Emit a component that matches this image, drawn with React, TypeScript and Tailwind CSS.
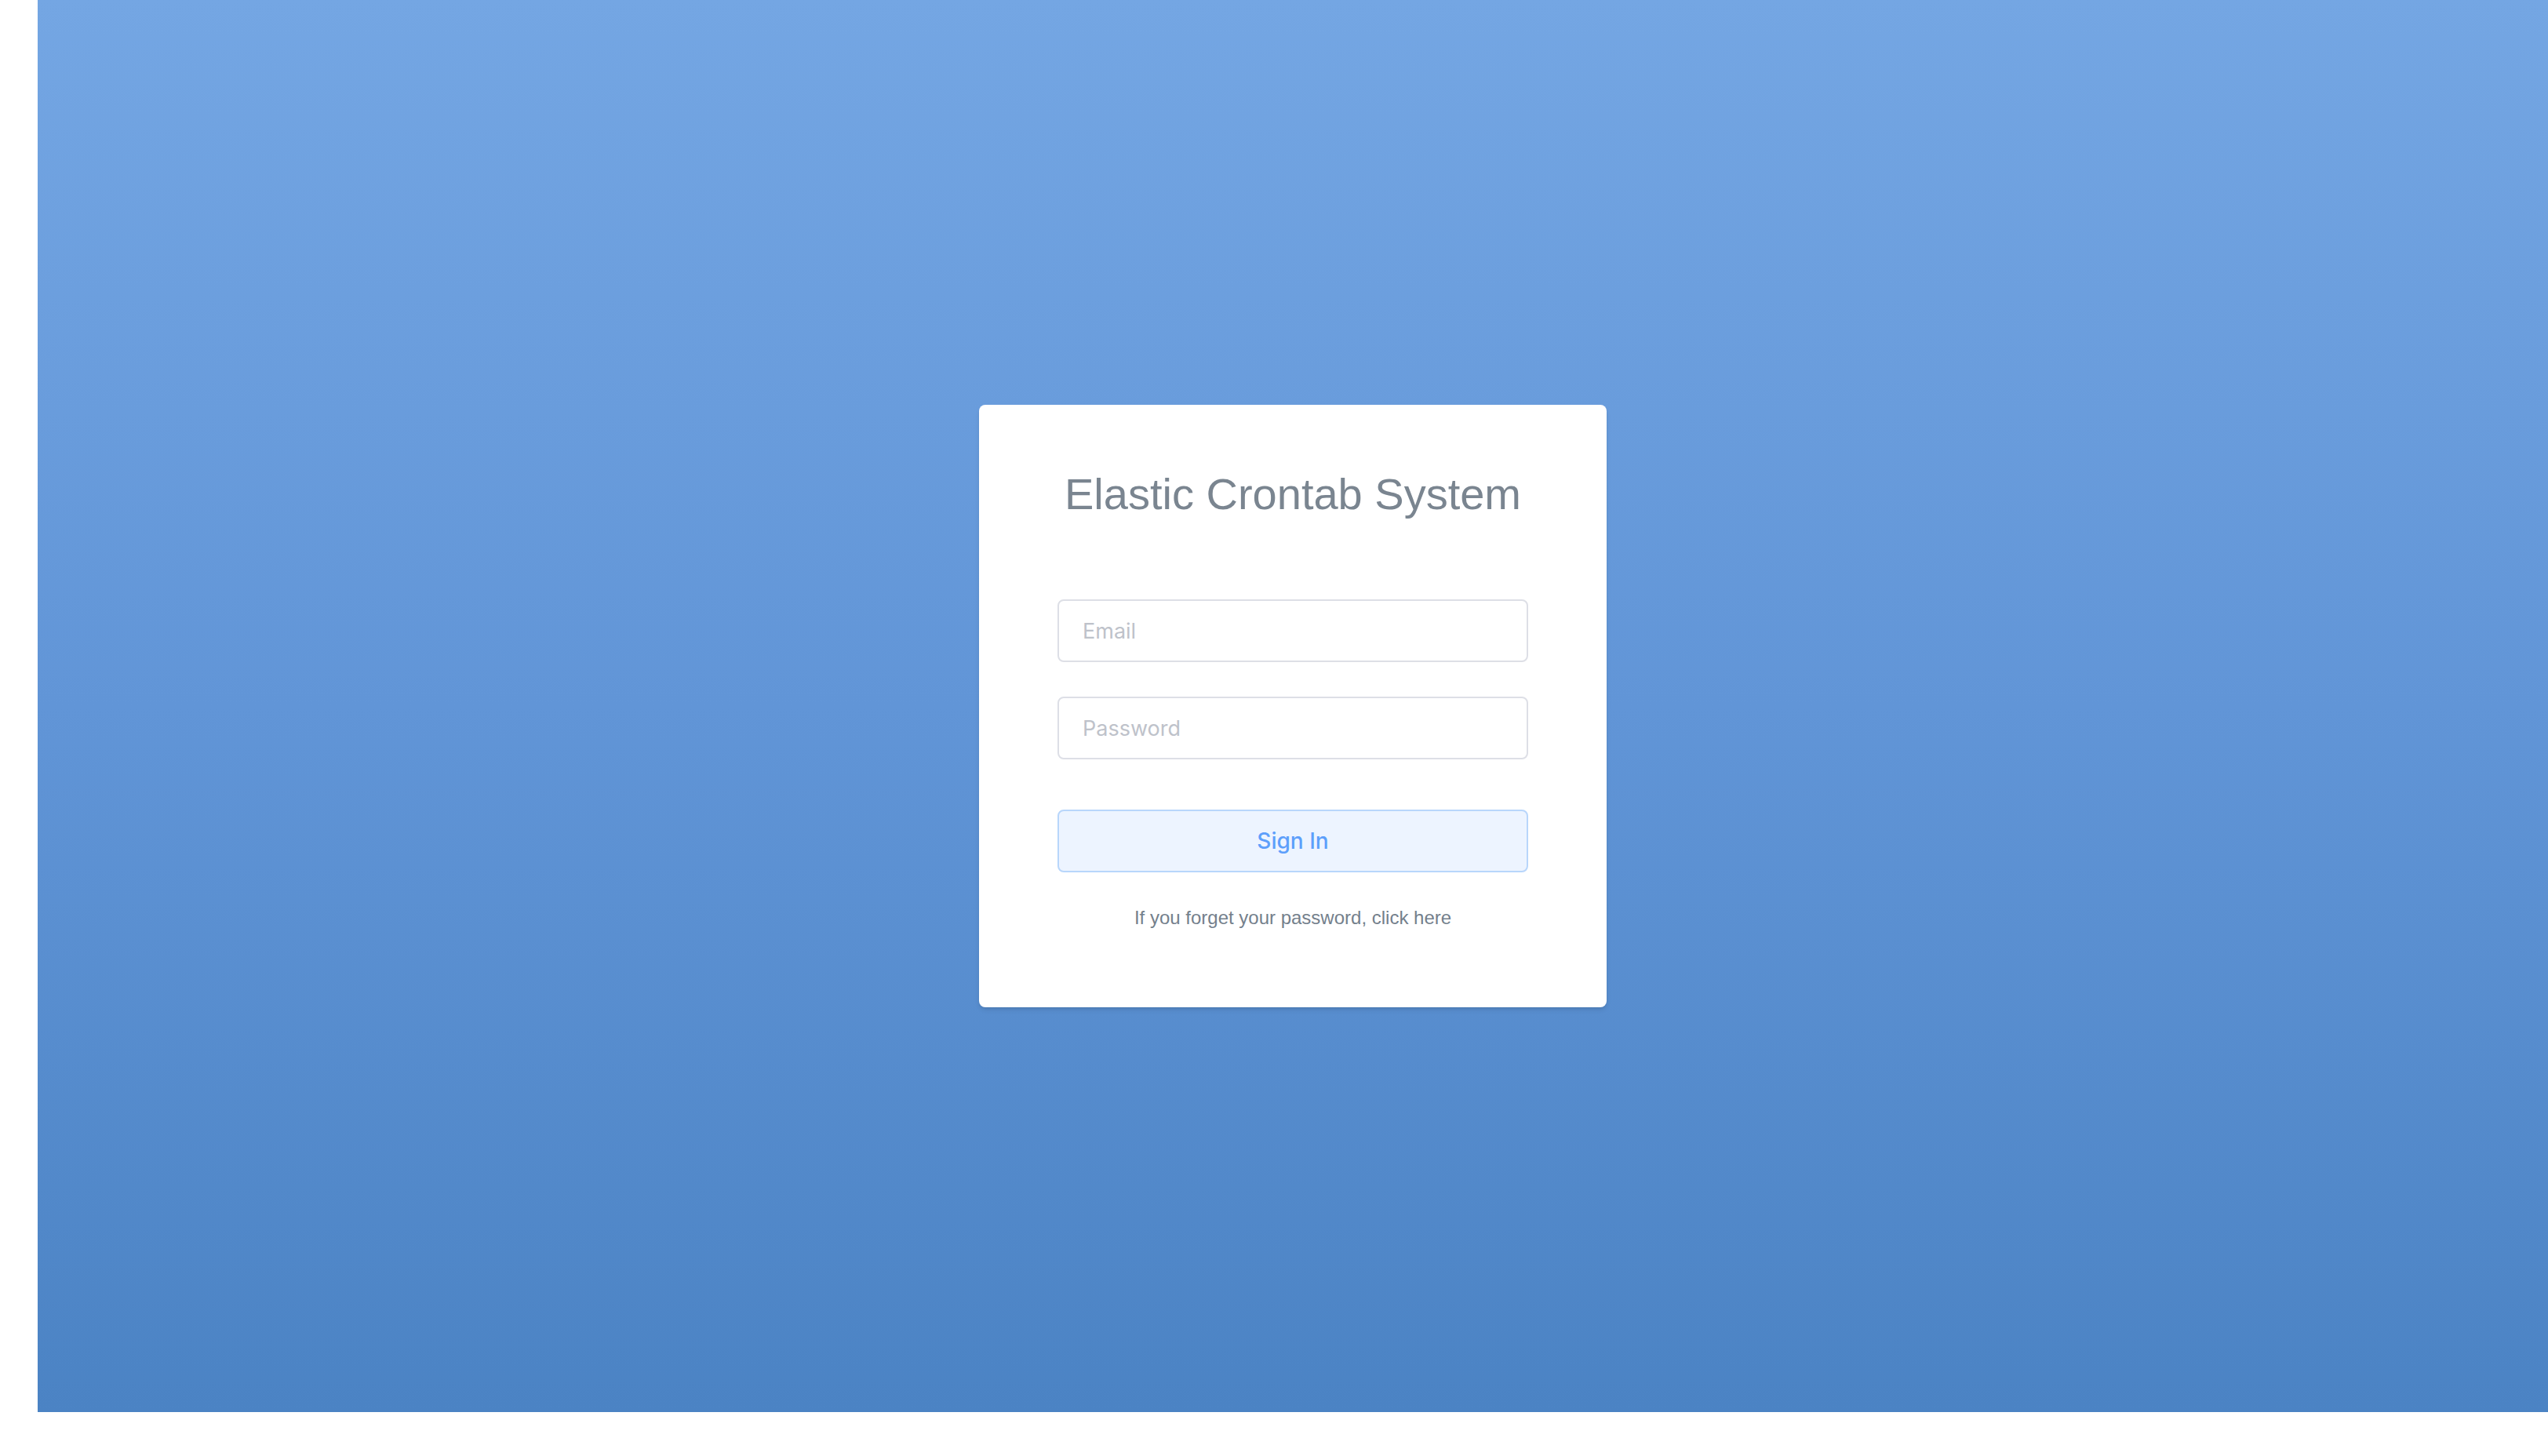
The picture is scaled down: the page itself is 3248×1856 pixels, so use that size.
export default function App() {
  return (
    <div className="h-screen bg-white pb-14 pl-12 font-['Liberation_Sans',Arial,sans-serif]">
      <main className="flex h-full items-center justify-center bg-linear-to-b/srgb from-[#74a6e3] via-[#6195d7] to-[#4b83c4]">
        <form className="flex w-[800px] flex-col rounded-lg bg-white px-[100px] pt-20 pb-24 text-center shadow-md">
          <h1 className="text-[56px] leading-[68px] whitespace-nowrap text-[#7a8590]">Elastic Crontab System</h1>
          <input type="email" aria-label="Email" placeholder="Email" className="mt-[100px] h-20 rounded-lg border-2 border-[#dddfe6] px-[30px] font-['Inter',sans-serif] text-[27px] placeholder:text-[#bec2ca]" />
          <input type="password" aria-label="Password" placeholder="Password" className="mt-11 h-20 rounded-lg border-2 border-[#dddfe6] px-[30px] font-['Inter',sans-serif] text-[27px] placeholder:text-[#bec2ca]" />
          <button type="submit" className="mt-16 h-20 rounded-lg border-2 border-[#b8d6fb] bg-[#edf4ff] font-['Inter',sans-serif] text-[28px] font-medium text-[#5d9ffb]">Sign In</button>
          <a href="#reset" className="mt-10 text-[24px] leading-9 text-[#74808c]">If you forget your password, click here</a>
        </form>
      </main>
    </div>
  );
}
